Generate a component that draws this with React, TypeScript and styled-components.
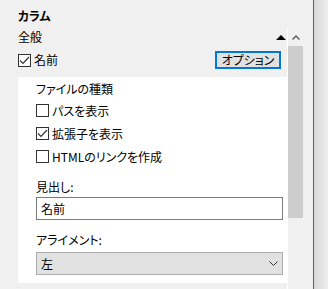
import React from 'react';
import styled, { createGlobalStyle } from 'styled-components';

const GlobalStyle = createGlobalStyle`
  html, body {
    margin: 0;
    padding: 0;
    background: #f0f0f0;
  }
  body {
    font-family: "Noto Sans CJK JP", "Noto Sans", sans-serif;
    font-size: 12px;
    color: #000;
    font-feature-settings: "palt" 1;
  }
  * {
    box-sizing: border-box;
  }
`;

const Window = styled.div`
  display: flex;
  width: 328px;
  height: 289px;
  background: #f0f0f0;
  overflow: hidden;
`;

const Main = styled.div`
  width: 313px;
  padding-left: 18px;
  display: flex;
  flex-direction: column;
`;

const Divider = styled.div`
  width: 1px;
  background: #0078d7;
`;

const Shade = styled.div`
  flex: 1;
  background: linear-gradient(to right, #d8d8d8, #eeeeee);
`;

const Title = styled.div`
  font-weight: 700;
  line-height: 16px;
  margin-top: 8px;
`;

const Body = styled.div`
  display: flex;
  margin-top: 5px;
  flex: 1;
  min-height: 0;
`;

const Content = styled.div`
  width: 269px;
  display: flex;
  flex-direction: column;
`;

const GroupHeader = styled.div`
  display: flex;
  align-items: center;
  justify-content: space-between;
  height: 16px;
  line-height: 16px;
`;

const Collapse = styled.span`
  width: 0;
  height: 0;
  border-left: 5px solid transparent;
  border-right: 5px solid transparent;
  border-bottom: 5px solid #000;
  margin-right: 1px;
`;

const OptionRow = styled.div`
  display: flex;
  align-items: center;
  justify-content: space-between;
  height: 18px;
  margin-top: 6px;
`;

const CheckLabel = styled.label`
  display: flex;
  align-items: center;
  gap: 3px;
  line-height: 16px;
`;

const Box = styled.span`
  width: 13px;
  height: 13px;
  border: 1px solid #333;
  background: #fff;
  display: flex;
  align-items: center;
  justify-content: center;
`;

const OptionButton = styled.button`
  width: 66px;
  height: 18px;
  margin-right: 6px;
  padding: 0;
  border: 2px solid #0078d7;
  background: #e1e1e1;
  font: inherit;
  line-height: 14px;
  color: #000;
`;

const Panel = styled.div`
  margin-top: 8px;
  background: #fff;
  padding: 4px 4px 8px 18px;
  display: flex;
  flex-direction: column;
`;

const SectionLabel = styled.div`
  line-height: 16px;
`;

const CheckList = styled.div`
  margin-top: 2px;
  display: flex;
  flex-direction: column;
`;

const CheckRow = styled.div`
  height: 23px;
  display: flex;
  align-items: center;
`;

const FieldLabel = styled.div<{ $gap: number }>`
  line-height: 16px;
  margin-top: ${p => p.$gap}px;
`;

const TextBox = styled.div`
  height: 23px;
  margin-top: 2px;
  border: 1px solid #7a7a7a;
  padding: 0 4px;
  display: flex;
  align-items: center;
`;

const Select = styled.div`
  height: 23px;
  margin-top: 4px;
  border: 1px solid #adadad;
  background: #e1e1e1;
  padding: 0 4px;
  display: flex;
  align-items: center;
  justify-content: space-between;
`;

const Scrollbar = styled.div`
  width: 17px;
  border-left: 1px solid #fff;
  display: flex;
  flex-direction: column;
`;

const ArrowBox = styled.div`
  height: 17px;
  display: flex;
  align-items: center;
  justify-content: center;
`;

const Thumb = styled.div`
  width: 15px;
  height: 172px;
  background: #cdcdcd;
`;

const CheckBox: React.FC<{ checked?: boolean }> = ({ checked }) => (
  <Box>
    {checked && (
      <svg width="11" height="11" viewBox="0 0 11 11">
        <polyline points="1,5.5 4,8.5 10,2" fill="none" stroke="#333" strokeWidth="1.2" />
      </svg>
    )}
  </Box>
);

const fileOptions = [
  { label: 'パスを表示', checked: false },
  { label: '拡張子を表示', checked: true },
  { label: 'HTMLのリンクを作成', checked: false },
];

export default function App() {
  return (
    <>
      <GlobalStyle />
      <Window>
        <Main>
          <Title>カラム</Title>
          <Body>
            <Content>
              <GroupHeader>
                <span>全般</span>
                <Collapse />
              </GroupHeader>
              <OptionRow>
                <CheckLabel>
                  <CheckBox checked />
                  名前
                </CheckLabel>
                <OptionButton>オプション</OptionButton>
              </OptionRow>
              <Panel>
                <SectionLabel>ファイルの種類</SectionLabel>
                <CheckList>
                  {fileOptions.map(o => (
                    <CheckRow key={o.label}>
                      <CheckLabel>
                        <CheckBox checked={o.checked} />
                        {o.label}
                      </CheckLabel>
                    </CheckRow>
                  ))}
                </CheckList>
                <FieldLabel $gap={11}>見出し:</FieldLabel>
                <TextBox>名前</TextBox>
                <FieldLabel $gap={12}>アライメント:</FieldLabel>
                <Select>
                  <span>左</span>
                  <svg width="9" height="5" viewBox="0 0 9 5">
                    <polyline points="0.5,0.5 4.5,4.5 8.5,0.5" fill="none" stroke="#333" strokeWidth="1" />
                  </svg>
                </Select>
              </Panel>
            </Content>
            <Scrollbar>
              <ArrowBox>
                <svg width="8" height="5" viewBox="0 0 8 5">
                  <polyline points="0.5,4.5 4,1 7.5,4.5" fill="none" stroke="#606060" strokeWidth="1.5" />
                </svg>
              </ArrowBox>
              <Thumb />
            </Scrollbar>
          </Body>
        </Main>
        <Divider />
        <Shade />
      </Window>
    </>
  );
}
